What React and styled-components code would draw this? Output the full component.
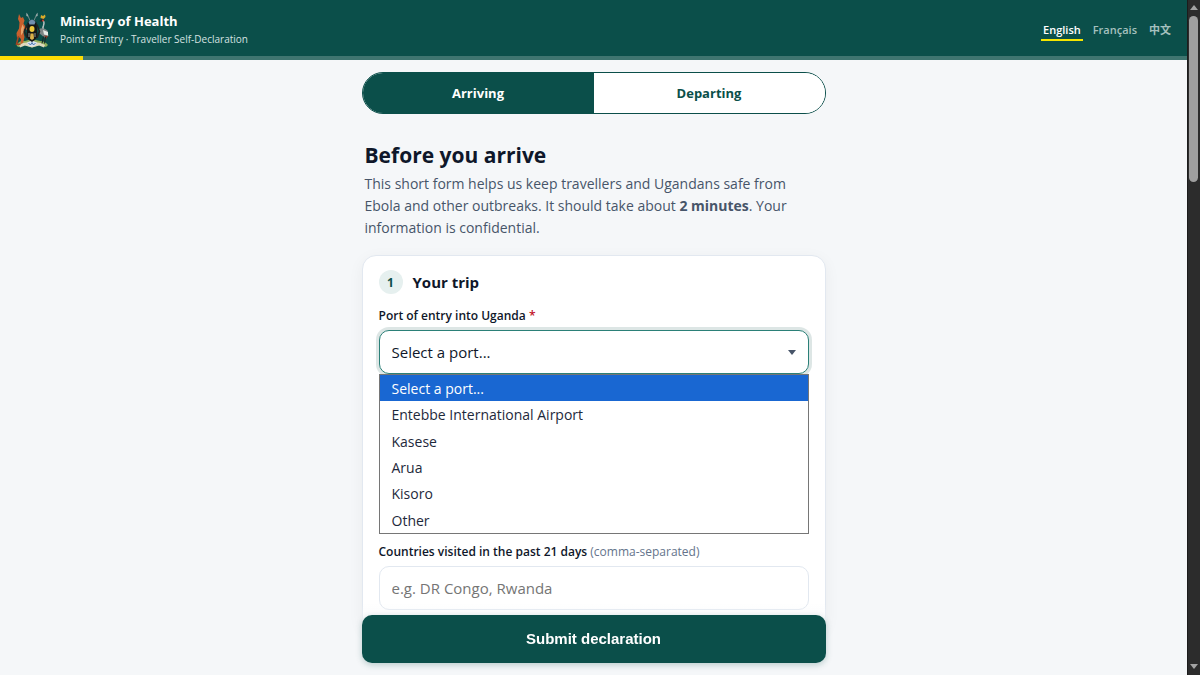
import React, { useState } from 'react';
import styled, { createGlobalStyle } from 'styled-components';

const ports = ['Entebbe International Airport', 'Kasese', 'Arua', 'Kisoro', 'Other'];
const placeholder = 'Select a port...';

const CoatOfArms = () => (
  <Crest viewBox="0 0 68 72" role="img" aria-label="Coat of arms">
    <path d="M3 66 Q10 56 20 58 L34 54 L50 58 Q60 58 66 66 L62 70 L50 66 L34 71 L18 66 L6 70 Z" fill="#8fae5c" />
    <path d="M8 66 Q20 58 34 63 Q48 58 60 66 L58 71 L48 67 L34 71 L20 67 L10 71 Z" fill="#ded9bd" />
    <path d="M24 61 L34 57 L44 61 L41 67 L34 69 L27 67 Z" fill="#d9e4ef" />
    <path d="M27 62 L31 66 L34 61 L37 66 L41 62" fill="none" stroke="#4674ae" strokeWidth="2" />
    <path d="M24 3 L33 24 M44 3 L35 24" stroke="#9aa0a0" strokeWidth="1.5" />
    <path d="M23 1 L26 9 L23 8 Z M45 1 L42 9 L45 8 Z" fill="#c6cbcb" />
    <path d="M8 4 L12 12 L16 10 L19 17 L17 23 L22 31 L25 33 L22 36 L18 33 L17 42 L19 50 L16 62 L11 64 L12 54 L7 49 L4 52 L3 42 L8 33 L9 21 L6 14 Z" fill="#c8602d" />
    <path d="M15 25 L18 31 L16 41 L12 47 L12 34 Z" fill="#e9a56c" />
    <path d="M7 48 L3 64 L11 65" fill="none" stroke="#a84420" strokeWidth="3" />
    <path d="M54 17 Q60 18 57 27 Q54 33 58 39" fill="none" stroke="#b9c3c3" strokeWidth="3" />
    <path d="M47 35 Q55 29 65 37 L67 48 L59 51 L49 43 Z" fill="#7d8585" />
    <path d="M56 36 L66 40 L66 47 L58 45 Z" fill="#e7e9e5" />
    <path d="M58 47 L66 48 L62 54 Z" fill="#843727" />
    <path d="M57 49 L54 63 M61 50 L59 63" stroke="#1c2424" strokeWidth="2" />
    <path d="M52 15 L49 18 L54 20 L59 17 L57 12 Z" fill="#252626" />
    <path d="M51 12 L52 6 L56 8 L60 5 L61 10 L57 14 Z" fill="#d9aa2a" />
    <circle cx="56" cy="17" r="2" fill="#cd4838" />
    <path d="M25 21 Q34 10 43 21 L45 50 Q40 57 34 60 Q27 57 23 50 Z" fill="#151716" />
    <path d="M27 20 Q34 10 41 20 L39 25 H29 Z" fill="#7190af" />
    <path d="M24 25 L19 39 L24 52 M44 25 L49 39 L44 52" fill="none" stroke="#222" strokeWidth="3" />
    <ellipse cx="34" cy="34" rx="5" ry="6" fill="#ecc83c" />
    <path d="M31 43 H37 L38 53 L34 56 L30 53 Z" fill="#d9b04a" />
    <path d="M28 42 V50 M40 42 V50" fill="none" stroke="#b9c0bc" strokeWidth="1.5" />
  </Crest>
);

const App = () => {
  const [direction, setDirection] = useState('arriving');
  const [port, setPort] = useState('');

  return (
    <Window>
      <GlobalStyle />
      <Page>
        <Header>
          <CoatOfArms />
          <Brand>
            <Ministry>Ministry of Health</Ministry>
            <Tagline>Point of Entry · Traveller Self-Declaration</Tagline>
          </Brand>
          <Languages>
            <Language href="#en" $active>English</Language>
            <Language href="#fr">Français</Language>
            <Language href="#zh">中文</Language>
          </Languages>
        </Header>
        <Track>
          <Progress />
        </Track>
        <Scroller>
          <Form onSubmit={(e) => e.preventDefault()}>
            <Tabs>
              <Tab type="button" $active={direction === 'arriving'} onClick={() => setDirection('arriving')}>
                Arriving
              </Tab>
              <Tab type="button" $active={direction === 'departing'} onClick={() => setDirection('departing')}>
                Departing
              </Tab>
            </Tabs>
            <Intro>
              <Title>Before you arrive</Title>
              <Lead>
                This short form helps us keep travellers and Ugandans safe from Ebola and other
                outbreaks. It should take about <strong>2 minutes</strong>. Your information is
                confidential.
              </Lead>
            </Intro>
            <Card>
              <CardHead>
                <Step>1</Step>
                <CardTitle>Your trip</CardTitle>
              </CardHead>
              <Label htmlFor="port">
                Port of entry into Uganda <Required>*</Required>
              </Label>
              <SelectWrap>
                <Select id="port" value={port} onChange={(e) => setPort(e.target.value)}>
                  <option value="">{placeholder}</option>
                  {ports.map((name) => <option key={name} value={name}>{name}</option>)}
                </Select>
                <Caret viewBox="0 0 8 5" aria-hidden="true">
                  <path d="M0 0 H8 L4 5 Z" fill="#475569" />
                </Caret>
              </SelectWrap>
              <Options role="listbox" aria-label="Port of entry">
                {['', ...ports].map((name) => (
                  <Option
                    key={name}
                    role="option"
                    aria-selected={port === name}
                    $active={port === name}
                    onClick={() => setPort(name)}
                  >
                    {name || placeholder}
                  </Option>
                ))}
              </Options>
              <Label htmlFor="countries">
                Countries visited in the past 21 days <Hint>(comma-separated)</Hint>
              </Label>
              <Input id="countries" placeholder="e.g. DR Congo, Rwanda" />
            </Card>
            <SubmitBar>
              <Submit type="submit">Submit declaration</Submit>
            </SubmitBar>
          </Form>
        </Scroller>
      </Page>
      <Scrollbar aria-hidden="true">
        <Arrow viewBox="0 0 8 5"><path d="M0 5 L4 0 L8 5 Z" fill="#a3a3a3" /></Arrow>
        <Thumb />
        <Spacer />
        <Arrow viewBox="0 0 8 5"><path d="M0 0 L4 5 L8 0 Z" fill="#a3a3a3" /></Arrow>
      </Scrollbar>
    </Window>
  );
};

export default App;

const GlobalStyle = createGlobalStyle`
  * {
    box-sizing: border-box;
  }

  body {
    margin: 0;
    background: #f5f7f9;
    color: #0f172a;
    font-family: "Open Sans", "Noto Sans", "Noto Sans CJK SC", sans-serif;
    font-size: 14px;
  }
`;

const Window = styled.div`
  display: flex;
  height: 100vh;
`;

const Page = styled.div`
  flex: 1;
  min-width: 0;
  display: flex;
  flex-direction: column;
`;

const Header = styled.header`
  display: flex;
  align-items: center;
  gap: 11px;
  height: 56px;
  padding: 4px 14px 0 15px;
  background: #0b4f4a;
  color: #fff;
`;

const Crest = styled.svg`
  width: 34px;
  height: 36px;
`;

const Brand = styled.div`
  flex: 1;
`;

const Ministry = styled.div`
  font-size: 13px;
  font-weight: 700;
  line-height: 18px;
`;

const Tagline = styled.div`
  font-size: 10px;
  line-height: 18px;
  color: #d5e2e1;
`;

const Languages = styled.nav`
  display: flex;
  gap: 8px;
`;

const Language = styled.a`
  padding: 2px 2px 0;
  border-bottom: 2px solid ${(p) => (p.$active ? '#f5e500' : 'transparent')};
  color: ${(p) => (p.$active ? '#fff' : '#a5c0be')};
  font-size: 11px;
  font-weight: 600;
  line-height: 18px;
  text-decoration: none;
`;

const Track = styled.div`
  height: 4px;
  flex-shrink: 0;
  background: #3f7570;
`;

const Progress = styled.div`
  width: 7%;
  height: 100%;
  background: #fcdc04;
`;

const Scroller = styled.main`
  flex: 1;
  min-height: 0;
  overflow-y: auto;
  scrollbar-width: none;
`;

const Form = styled.form`
  width: 100%;
  max-width: 464px;
  margin: 0 auto;
  padding-top: 12px;
`;

const Tabs = styled.div`
  display: flex;
  overflow: hidden;
  border: 1px solid #0b4f4a;
  border-radius: 21px;
`;

const Tab = styled.button`
  flex: 1;
  height: 40px;
  border: 0;
  background: ${(p) => (p.$active ? '#0b4f4a' : '#fff')};
  color: ${(p) => (p.$active ? '#fff' : '#0b4f4a')};
  font-family: inherit;
  font-size: 13px;
  font-weight: 700;
`;

const Intro = styled.div`
  padding: 26px 3px 16px;
`;

const Title = styled.h1`
  margin: 0 0 3px;
  font-size: 21px;
  font-weight: 700;
  line-height: 30px;
`;

const Lead = styled.p`
  margin: 0;
  color: #475569;
  font-size: 14px;
  line-height: 22px;
`;

const Card = styled.section`
  padding: 14px 16px 20px;
  border: 1px solid #e2e8f0;
  border-radius: 14px;
  background: #fff;
  box-shadow: 0 4px 16px rgba(15, 23, 42, 0.05);
`;

const CardHead = styled.div`
  display: flex;
  align-items: center;
  gap: 10px;
  margin-bottom: 12px;
`;

const Step = styled.span`
  display: grid;
  place-items: center;
  width: 24px;
  height: 24px;
  border-radius: 50%;
  background: #e6f0ef;
  color: #0b4f4a;
  font-size: 12px;
  font-weight: 700;
`;

const CardTitle = styled.h2`
  margin: 0;
  font-size: 15px;
  font-weight: 700;
  line-height: 24px;
`;

const Label = styled.label`
  display: block;
  margin-bottom: 4px;
  font-size: 12px;
  font-weight: 600;
  line-height: 20px;
`;

const Required = styled.span`
  color: #c1121f;
`;

const Hint = styled.span`
  color: #64748b;
  font-weight: 400;
`;

const SelectWrap = styled.div`
  position: relative;
`;

const Select = styled.select`
  display: block;
  width: 100%;
  height: 44px;
  padding: 0 12px;
  appearance: none;
  border: 1px solid #2b8078;
  border-radius: 10px;
  background: #fff;
  box-shadow: 0 0 0 3px rgba(11, 79, 74, 0.14);
  color: #0f172a;
  font-family: inherit;
  font-size: 15px;
  font-weight: 500;
`;

const Caret = styled.svg`
  position: absolute;
  top: 20px;
  right: 13px;
  width: 8px;
  height: 5px;
`;

const Options = styled.ul`
  position: relative;
  display: grid;
  grid-auto-rows: 1fr;
  height: 160px;
  margin: 0 0 8px;
  padding: 0;
  border: 1px solid #767676;
  background: #fff;
  list-style: none;
`;

const Option = styled.li`
  display: flex;
  align-items: center;
  padding: 2px 12px 0;
  background: ${(p) => (p.$active ? '#1967d2' : '#fff')};
  color: ${(p) => (p.$active ? '#fff' : '#1e293b')};
  font-size: 14px;
  line-height: 22px;
`;

const Input = styled.input`
  display: block;
  width: 100%;
  height: 44px;
  padding: 0 12px;
  border: 1px solid #e2e8f0;
  border-radius: 10px;
  background: #fff;
  color: #0f172a;
  font-family: inherit;
  font-size: 15px;
  font-weight: 500;

  &::placeholder {
    color: #757575;
  }
`;

const SubmitBar = styled.div`
  position: sticky;
  bottom: 0;
  padding: 12px 0;
  background: linear-gradient(rgba(245, 247, 249, 0), #f5f7f9 30px);
`;

const Submit = styled.button`
  display: block;
  width: 100%;
  height: 48px;
  padding: 0 0 2px;
  border: 0;
  border-radius: 10px;
  background: #0b4f4a;
  box-shadow: 0 2px 6px rgba(11, 79, 74, 0.25);
  color: #fff;
  font-family: "Liberation Sans", Arial, sans-serif;
  font-size: 15px;
  font-weight: 700;
`;

const Scrollbar = styled.div`
  display: flex;
  flex-direction: column;
  align-items: center;
  width: 13px;
  padding: 5px 0 6px;
  background: #2c2c2c;
  box-shadow: inset 1px 0 #1c1c1c;
`;

const Arrow = styled.svg`
  width: 8px;
  height: 5px;
`;

const Thumb = styled.div`
  width: 9px;
  height: 25%;
  margin-top: 6px;
  border-radius: 5px;
  background: #9f9f9f;
`;

const Spacer = styled.div`
  flex: 1;
`;
